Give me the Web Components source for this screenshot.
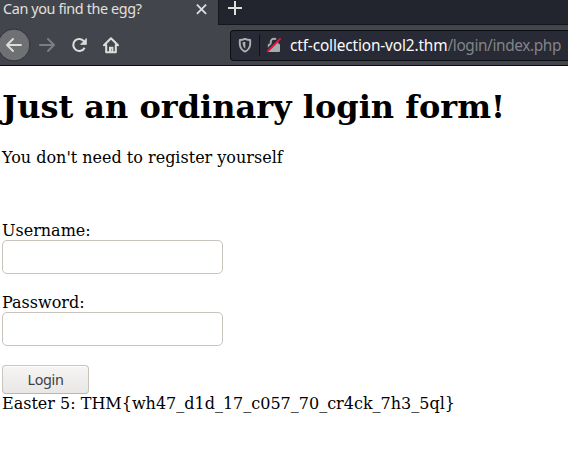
<!DOCTYPE html>
<html lang="en"><head><meta charset="utf-8"><title>Can you find the egg?</title>
<style>html,body{margin:0;width:568px;height:474px;overflow:hidden;background:#fff}</style></head>
<body><browser-window></browser-window>
<script>
const define = (name, html) => customElements.define(name, class extends HTMLElement {
  constructor() {
    super();
    const t = document.createElement('template');
    t.innerHTML = html;
    this.attachShadow({mode: 'open'}).append(t.content.cloneNode(true));
  }
});

define('tab-strip', `<style>
:host{display:flex;height:25px;background:#23252e;font:14.4px/18px "Noto Sans",sans-serif;color:#e0e0dc}
.tab{box-sizing:border-box;width:218px;height:25px;background:#43454c;display:flex;padding-left:3px}
.title{flex:1;white-space:nowrap;letter-spacing:-.38px}
.rest{flex:1;border-left:1px solid #15171d;border-bottom:1px solid #15171d}
svg{display:block}.tab svg{margin:4px 11px 0 0}
</style>
<div class="tab"><span class="title"><slot></slot></span>
<svg width="11" height="11" fill="none" stroke="#dedede" stroke-width="1.8"><path d="M.9 .6 10.1 9.8M10.1 .6 .9 9.8"/></svg></div>
<div class="rest"><svg width="34" height="20" fill="none" stroke="#dfdfdb" stroke-width="2"><path d="M9 8H23M16 1V15"/></svg></div>`);

define('nav-buttons', `<style>
:host{display:block;width:230px;height:40px}svg{display:block}
</style>
<svg width="230" height="40" viewBox="0 25 230 40" fill="none" stroke="#dcdcd9" stroke-width="2" stroke-linecap="round" stroke-linejoin="round">
<circle cx="14" cy="45" r="16" fill="#6e7074" stroke="#303238" stroke-width="1"/>
<path d="M21 45H7M13 39 7 45 13 51"/>
<path stroke="#7d7e81" d="M40 45H54M48 39 54 45 48 51"/>
<path d="M84.2 41.5A6 6 0 1 0 84.6 47.7" stroke-linecap="butt" stroke-width="2.1"/><path d="M86.4 38.8V44.4H80.8Z" fill="#dcdcd9" stroke-width=".8"/>
<path d="M104 45.2 111 38.3 118 45.2M106.2 45V52.3H115.8V45" stroke-width="2.1"/>
<path d="M110 52V47.8H112.4V52" stroke-width="2" stroke-linejoin="miter"/>
</svg>`);

define('address-bar', `<style>
:host{box-sizing:border-box;display:flex;flex:1;height:31px;margin-top:5px;border:1px solid #0d0e12;border-right:0;border-radius:4px 0 0 4px;background:#282a35;font:15.4px/30px "Noto Sans",sans-serif;color:#83858a}
svg{flex:none;display:block}.url{white-space:nowrap;letter-spacing:-.39px}::slotted(b){font-weight:400;letter-spacing:-.14px;color:#fbfbfe}
</style>
<svg width="59" height="29" viewBox="231 31 59 29" fill="none">
<path d="M239.8 40Q242.4 40 245 38.9 247.6 40 250.2 40V44.2Q249.8 49.4 245 51.6 240.2 49.4 239.8 44.2Z" stroke="#aeafb1" stroke-width="1.9" stroke-linejoin="round"/>
<path d="M245.3 41.8V48.8Q243 47.2 242.6 44V42.2Z" fill="#aeafb1"/>
<path d="M259.5 34V56" stroke="#111218"/>
<path d="M270.7 44.5V42A3.3 3.3 0 0 1 277.3 42V44.5" stroke="#a9aaac" stroke-width="2"/>
<rect x="267.8" y="43.8" width="12.2" height="8.3" rx="1" fill="#a9aaac"/>
<path d="M266.2 50.8 279.2 37.8" stroke="#282a35" stroke-width="2"/>
<path d="M267.2 51.8 280.6 38.4" stroke="#f70b3c" stroke-width="2"/>
</svg><span class="url"><slot></slot></span>`);

define('browser-toolbar', `<style>
:host{display:flex;height:40px;background:#43454c;border-bottom:1px solid #0b0b0d}
</style><nav-buttons></nav-buttons><address-bar><b>ctf-collection-vol2.thm</b>/login/index.php</address-bar>`);

define('text-field', `<style>
:host{display:block}label{display:block;height:19px}
input{display:block;box-sizing:border-box;width:221px;height:34px;margin:0;padding:6px;border:1px solid #c8c3bc;border-radius:5px;background:#fff;outline:0}
</style><label><slot></slot></label><input>`);

define('login-button', `<style>
:host{display:block}
button{display:block;box-sizing:border-box;width:87px;height:29px;margin:0;padding:0 0 1px;border:1px solid #c8c3bd;border-bottom-color:#bbb6af;border-radius:4px;background:linear-gradient(#f6f5f4,#e9e7e5);box-shadow:inset 0 1px #fff;font:14.4px/27px "Noto Sans",sans-serif;letter-spacing:-.3px;color:#3e4143}
</style><button><slot></slot></button>`);

define('login-page', `<style>
:host{display:block;padding:23px 2px 0;font:16px/19px "DejaVu Serif",serif;color:#000;white-space:nowrap}
h1{margin:0 0 22px;font:bold 32px/37px "DejaVu Serif",serif}
p{margin:0 0 54px}text-field{margin-bottom:19px}
</style>
<h1>Just an ordinary login form!</h1><p>You don't need to register yourself</p>
<text-field>Username:</text-field><text-field>Password:</text-field>
<login-button>Login</login-button><div>Easter 5: THM{wh47_d1d_17_c057_70_cr4ck_7h3_5ql}</div>`);

define('browser-window', `<style>:host{display:block}</style>
<tab-strip>Can you find the egg?</tab-strip><browser-toolbar></browser-toolbar><login-page></login-page>`);
</script></body></html>
